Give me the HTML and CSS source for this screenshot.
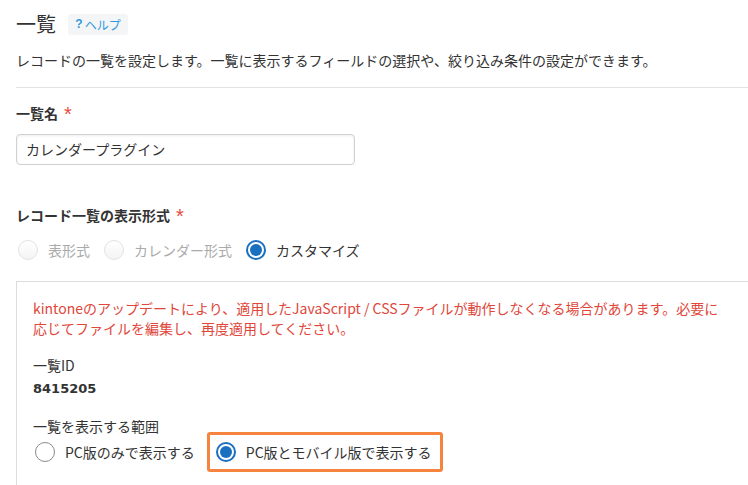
FILE: index.html
```html
<!DOCTYPE html>
<html lang="ja">
<head>
<meta charset="utf-8">
<link rel="stylesheet" href="styles.css">
</head>
<body>
<div class="page">
  <div class="title-row">
    <h1 class="title">一覧</h1>
    <span class="help"><span class="help-q">?</span>ヘルプ</span>
  </div>
  <p class="desc">レコードの一覧を設定します。一覧に表示するフィールドの選択や、絞り込み条件の設定ができます。</p>
  <div class="rule"></div>

  <div class="label label-first">一覧名<span class="req">*</span></div>
  <div class="input">カレンダープラグイン</div>

  <div class="label label-second">レコード一覧の表示形式<span class="req">*</span></div>
  <div class="radios">
    <span class="radio disabled"><span class="circle"></span>表形式</span>
    <span class="radio disabled"><span class="circle"></span>カレンダー形式</span>
    <span class="radio"><span class="circle checked"></span>カスタマイズ</span>
  </div>

  <div class="panel">
    <p class="warn">kintoneのアップデートにより、適用したJavaScript / CSSファイルが動作しなくなる場合があります。必要に<br>応じてファイルを編集し、再度適用してください。</p>
    <div class="field-label">一覧ID</div>
    <div class="field-value">8415205</div>
    <div class="field-label scope-label">一覧を表示する範囲</div>
    <div class="radios scope">
      <span class="radio"><span class="circle"></span>PC版のみで表示する</span>
      <span class="radio highlight"><span class="circle checked"></span>PC版とモバイル版で表示する</span>
    </div>
  </div>
</div>
</body>
</html>
```
FILE: styles.css
```css
* { box-sizing: border-box; }
html, body { margin: 0; padding: 0; background: #fff; }
body {
  font-family: "Noto Sans CJK JP", "Noto Sans", sans-serif;
  font-size: 14px;
  line-height: 20px;
  color: #333;
  overflow: hidden;
}
.page {
  padding: 10px 0 0 16px;
  width: 780px;
}
.title-row {
  display: flex;
  align-items: center;
  height: 28px;
}
.title {
  margin: 0;
  font-size: 20px;
  font-weight: normal;
  line-height: 28px;
  color: #333;
}
.help {
  margin-left: 12px;
  height: 21px;
  width: 60px;
  display: inline-flex;
  align-items: center;
  justify-content: center;
  background: #f3f5f7;
  border-radius: 3px;
  color: #3498db;
  font-size: 12px;
  line-height: 21px;
}
.help-q { font-weight: bold; margin-right: 2px; font-family: "Liberation Sans", sans-serif; }
.desc { margin: 12px 0 0; }
.rule {
  margin-top: 17px;
  height: 1px;
  background: #e3e3e3;
}
.label {
  font-weight: bold;
  color: #333;
  display: flex;
  align-items: center;
  height: 20px;
}
.label-first { margin-top: 15px; }
.label-second { margin-top: 40px; }
.req {
  color: #e74c3c;
  font-weight: normal;
  margin-left: 6px;
  font-size: 20px;
  line-height: 20px;
  font-family: "Liberation Sans", sans-serif;
  position: relative;
  top: 1px;
}
.input {
  margin-top: 11px;
  width: 339px;
  height: 31px;
  border: 1px solid #d0d0d0;
  border-radius: 4px;
  box-shadow: inset 0 1px 3px rgba(0,0,0,0.07);
  padding: 4px 9px;
  line-height: 21px;
  color: #333;
}
.radios {
  margin-top: 15px;
  display: flex;
  align-items: center;
  height: 20px;
}
.radio {
  display: inline-flex;
  align-items: center;
  margin-right: 12px;
  color: #333;
}
.circle {
  width: 20px;
  height: 20px;
  border-radius: 50%;
  border: 1px solid #8a8a8a;
  background: #fff;
  margin: 0 10px 0 2px;
  flex: none;
  position: relative;
}
.radio.disabled { color: #aaa; }
.radio.disabled .circle {
  border-color: #e2e2e2;
  background: linear-gradient(#fff, #f4f4f4);
}
.circle.checked {
  border: 2px solid #1a6fc0;
}
.circle.checked::after {
  content: "";
  position: absolute;
  left: 2px;
  top: 2px;
  width: 12px;
  height: 12px;
  border-radius: 50%;
  background: #1a6fc0;
}
.panel {
  margin-top: 21px;
  border: 1px solid #dcdcdc;
  border-right: none;
  padding: 16px 0 20px 16px;
}
.warn {
  margin: 0;
  color: #e0463a;
  white-space: nowrap;
}
.field-label { margin-top: 17px; }
.field-value {
  margin-top: 4px;
  font-weight: bold;
  font-family: "DejaVu Sans", sans-serif;
  font-size: 13px;
}
.scope-label { margin-top: 19px; line-height: 16px; }
.scope { margin-top: -2px; height: 40px; }
.radio.highlight {
  height: 40px;
  border: 3px solid #f4843e;
  border-radius: 3px;
  padding: 0 8px 0 6px;
  margin-left: 0;
}
.radio.highlight .circle { margin-left: 0; }
```
